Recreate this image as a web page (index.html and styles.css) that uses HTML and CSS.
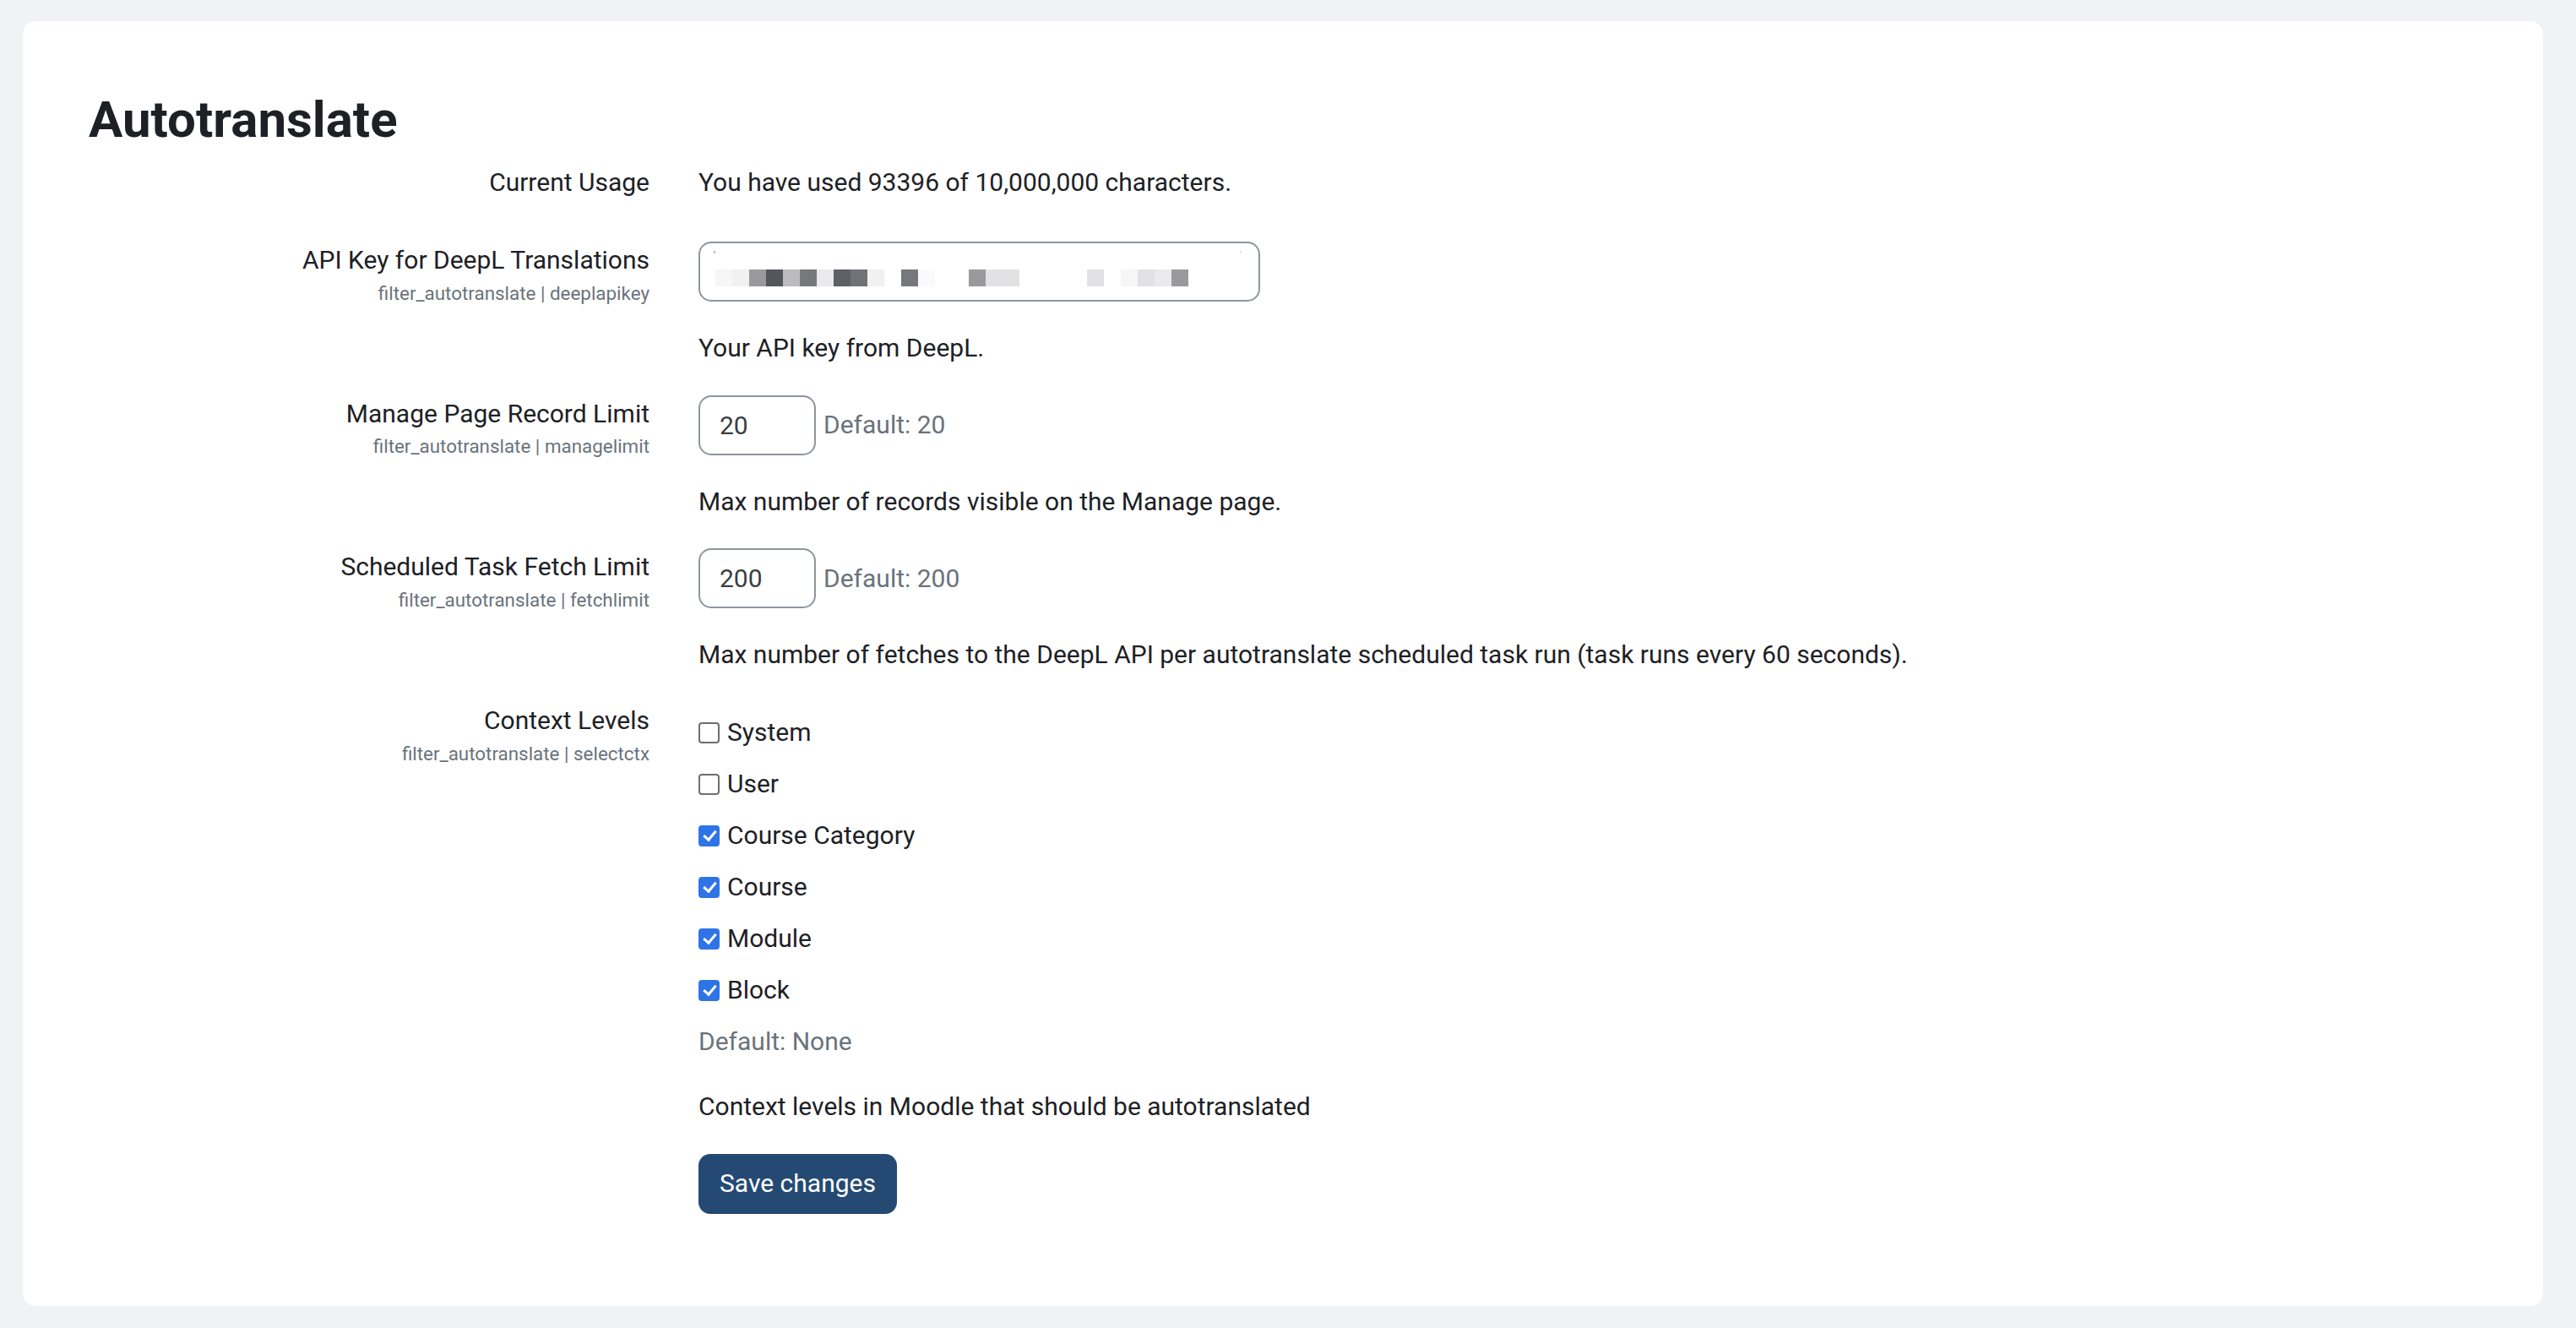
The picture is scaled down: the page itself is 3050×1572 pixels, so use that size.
FILE: index.html
```html
<!DOCTYPE html>
<html lang="en">
<head>
<meta charset="utf-8">
<title>Autotranslate</title>
<link rel="stylesheet" href="styles.css">
</head>
<body>
<main class="card">
  <h2 class="title">Autotranslate</h2>

  <div class="setting usage">
    <div class="label-col"><div class="lbl">Current Usage</div></div>
    <div class="content-col"><div class="text">You have used 93396 of 10,000,000 characters.</div></div>
  </div>

  <div class="setting">
    <div class="label-col">
      <label class="lbl">API Key for DeepL Translations</label>
      <span class="shortname">filter_autotranslate | deeplapikey</span>
    </div>
    <div class="content-col">
      <div class="field field-key">
        <span class="px l1"></span><span class="px l1b"></span><span class="px g2"></span><span class="px d2"></span><span class="px g1"></span><span class="px g3"></span><span class="px l2"></span><span class="px d1"></span><span class="px g3b"></span><span class="px l1b"></span><span class="px w"></span><span class="px g3"></span><span class="px l0"></span><span class="px w"></span><span class="px w"></span><span class="px g2"></span><span class="px l3"></span><span class="px l3"></span><span class="px w"></span><span class="px w"></span><span class="px w"></span><span class="px w"></span><span class="px l3"></span><span class="px w"></span><span class="px l1"></span><span class="px l3"></span><span class="px l2"></span><span class="px g2"></span>
      </div>
      <div class="desc">Your API key from DeepL.</div>
    </div>
  </div>

  <div class="setting">
    <div class="label-col">
      <label class="lbl">Manage Page Record Limit</label>
      <span class="shortname">filter_autotranslate | managelimit</span>
    </div>
    <div class="content-col">
      <div class="inline">
        <input class="field field-num" type="text" value="20">
        <span class="default-info">Default: 20</span>
      </div>
      <div class="desc">Max number of records visible on the Manage page.</div>
    </div>
  </div>

  <div class="setting">
    <div class="label-col">
      <label class="lbl">Scheduled Task Fetch Limit</label>
      <span class="shortname">filter_autotranslate | fetchlimit</span>
    </div>
    <div class="content-col">
      <div class="inline">
        <input class="field field-num" type="text" value="200">
        <span class="default-info">Default: 200</span>
      </div>
      <div class="desc">Max number of fetches to the DeepL API per autotranslate scheduled task run (task runs every 60 seconds).</div>
    </div>
  </div>

  <div class="setting">
    <div class="label-col">
      <label class="lbl">Context Levels</label>
      <span class="shortname">filter_autotranslate | selectctx</span>
    </div>
    <div class="content-col">
      <div class="checks">
        <label class="check"><input type="checkbox">System</label>
        <label class="check"><input type="checkbox">User</label>
        <label class="check"><input type="checkbox" checked>Course Category</label>
        <label class="check"><input type="checkbox" checked>Course</label>
        <label class="check"><input type="checkbox" checked>Module</label>
        <label class="check"><input type="checkbox" checked>Block</label>
      </div>
      <div class="default-info block">Default: None</div>
      <div class="desc">Context levels in Moodle that should be autotranslated</div>
    </div>
  </div>

  <div class="setting actions">
    <div class="label-col"></div>
    <div class="content-col"><button class="btn" type="button">Save changes</button></div>
  </div>
</main>
</body>
</html>
```

FILE: styles.css
```css
html, body {
  margin: 0;
  padding: 0;
}

body {
  background: #f1f2f6;
  font-family: Roboto, "Liberation Sans", Arial, sans-serif;
  font-size: 30px;
  line-height: 43.8px;
  color: #1d2125;
  padding: 25px 39px 26px 27px;
}

.card {
  background: #ffffff;
  border-radius: 15px;
  padding: 82px 78px 109px 78px;
}

.title {
  margin: 0 0 17px 0;
  font-size: 60px;
  line-height: 70px;
  font-weight: 700;
  color: #1d2125;
}

.setting {
  display: grid;
  grid-template-columns: 664px 1fr;
  column-gap: 58px;
  margin-bottom: 34px;
}

.setting.usage {
  margin-bottom: 48px;
}

.label-col {
  display: flex;
  flex-direction: column;
  align-items: flex-end;
  text-align: right;
}

.lbl {
  display: block;
}

.shortname {
  display: block;
  font-size: 22.4px;
  line-height: 34px;
  color: #6a737b;
}

.content-col {
  display: flex;
  flex-direction: column;
  align-items: flex-start;
}

.field {
  box-sizing: border-box;
  height: 71px;
  border: 2px solid #8f959e;
  border-radius: 15px;
  background: #ffffff;
  font-family: inherit;
  font-size: 30px;
  color: #3a3f44;
}

.field-key {
  position: relative;
  width: 665px;
  display: flex;
  padding: 31px 0 0 18px;
}

.field-key::before,
.field-key::after {
  content: "";
  position: absolute;
  top: 9px;
  width: 2px;
  height: 3px;
  background: #b8b8ba;
}

.field-key::before { left: 16px; }
.field-key::after { right: 20px; background: #e4e4e6; }

.px {
  display: block;
  width: 20px;
  height: 20px;
}

.px.w { background: #ffffff; }
.px.l0 { background: #fafafa; }
.px.l1 { background: #f6f6f7; }
.px.l1b { background: #f1f1f2; }
.px.l2 { background: #eaeaec; }
.px.l3 { background: #e2e2e4; }
.px.g1 { background: #bcbcbe; }
.px.g2 { background: #9a9a9c; }
.px.g3 { background: #76787c; }
.px.g3b { background: #6f7276; }
.px.d1 { background: #5d6064; }
.px.d2 { background: #53565b; }

.field-num {
  width: 139px;
  padding: 0 23px;
  outline: none;
}

.inline {
  display: flex;
  align-items: center;
  gap: 9px;
}

.default-info {
  color: #6a737b;
}

.default-info.block {
  display: block;
}

.desc {
  margin-top: 33px;
}

.checks {
  padding-top: 14px;
  display: flex;
  flex-direction: column;
}

.check {
  display: flex;
  align-items: center;
  gap: 9px;
  margin-bottom: 17.2px;
}

.check input {
  appearance: none;
  -webkit-appearance: none;
  box-sizing: border-box;
  position: relative;
  width: 25px;
  height: 25px;
  margin: 0;
  border: 2px solid #6f6f6f;
  border-radius: 4px;
  background: #ffffff;
}

.check input:checked {
  background: #2f74e6;
  border-color: #2f74e6;
}

.check input:checked::before {
  content: "";
  position: absolute;
  left: 6.5px;
  top: 1.5px;
  width: 6px;
  height: 12px;
  border-right: 3.5px solid #ffffff;
  border-bottom: 3.5px solid #ffffff;
  transform: rotate(40deg);
}

.btn {
  box-sizing: border-box;
  height: 71px;
  padding: 0 25px;
  border: 0;
  border-radius: 14px;
  background: #244a74;
  color: #ffffff;
  font-family: inherit;
  font-size: 30px;
  line-height: 43.8px;
}

.setting.actions {
  margin-bottom: 0;
}
```
